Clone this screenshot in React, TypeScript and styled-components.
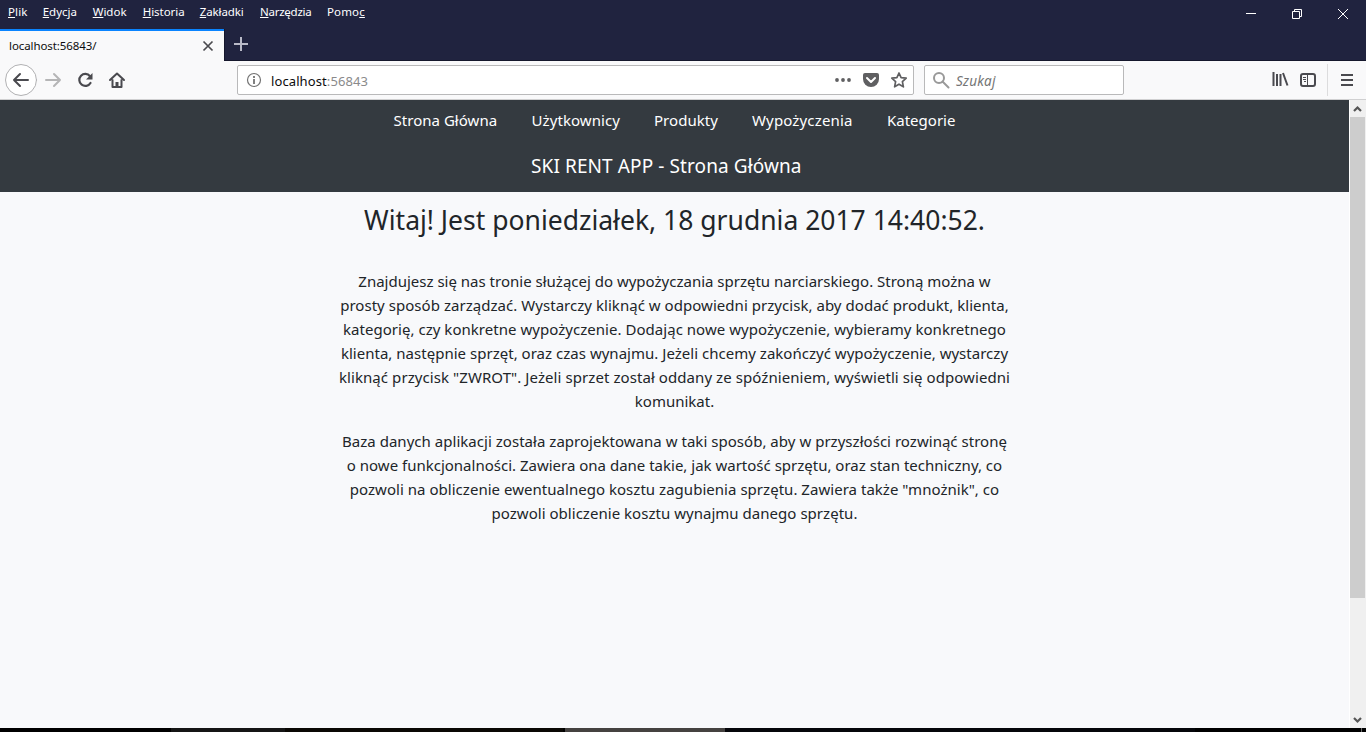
import React from "react";
import styled, { createGlobalStyle } from "styled-components";

const GlobalStyle = createGlobalStyle`
  * { box-sizing: border-box; }
  html, body { margin: 0; padding: 0; overflow: hidden; }
  body { font-family: "Noto Sans", "Open Sans", sans-serif; }
`;

const Window = styled.div`
  width: 1366px;
  height: 732px;
  display: flex;
  flex-direction: column;
  background: #000;
  overflow: hidden;
`;

const MenuBar = styled.div`
  height: 29px;
  flex: none;
  display: flex;
  align-items: flex-start;
  justify-content: space-between;
  background: #20233f;
`;

const Menus = styled.div`
  display: flex;
  padding: 4px 0 0 8px;
`;

const MenuItem = styled.span<{ $width: number; $spacing: number }>`
  width: ${(p) => p.$width}px;
  color: #fff;
  font-size: 11.5px;
  line-height: 16px;
  letter-spacing: ${(p) => p.$spacing}px;
  white-space: nowrap;
  u { text-underline-offset: 1px; text-decoration-thickness: 1px; }
`;

const WindowButtons = styled.div`
  display: flex;
  height: 28px;
`;

const WindowButton = styled.div`
  width: 46px;
  height: 28px;
  display: flex;
`;

const TabStrip = styled.div`
  height: 32px;
  flex: none;
  display: flex;
  background: #20233f;
`;

const Tab = styled.div`
  width: 224px;
  height: 32px;
  display: flex;
  align-items: center;
  justify-content: space-between;
  padding: 0 10px 1px 9px;
  background: #f9f9fa;
  border-top: 2px solid #0a84ff;
`;

const TabTitle = styled.span`
  font-size: 11.5px;
  line-height: 16px;
  letter-spacing: -0.08px;
  color: #0c0c0d;
`;

const StripRest = styled.div`
  flex: 1;
  border-left: 1px solid #15172c;
  border-bottom: 1px solid #15172c;
`;

const Toolbar = styled.div`
  height: 39px;
  flex: none;
  display: flex;
  background: #f9f9fa;
  border-bottom: 1px solid #d0d0d1;
`;

const NavButtons = styled.div`
  width: 237px;
  display: flex;
`;

const Field = styled.div<{ $width: number }>`
  width: ${(p) => p.$width}px;
  height: 30px;
  margin: 4px 10px 0 0;
  display: flex;
  align-items: center;
  background: #fff;
  border: 1px solid #b9b9ba;
  border-radius: 2px;
`;

const Address = styled.span`
  flex: 1;
  padding: 2px 0 0 3px;
  font-size: 13px;
  line-height: 20px;
  letter-spacing: 0.1px;
  color: #8a8a8b;
  b { font-weight: 400; color: #0c0c0d; }
`;

const Placeholder = styled.span`
  padding: 2px 0 0 3px;
  font-size: 13.5px;
  line-height: 20px;
  letter-spacing: 0.2px;
  font-style: italic;
  color: #757575;
`;

const ToolbarEnd = styled.div`
  margin-left: auto;
  display: flex;
`;

const Viewport = styled.div`
  height: 628px;
  flex: none;
  display: flex;
  background: #f8f9fb;
`;

const Page = styled.div`
  width: 1349px;
  flex: none;
  display: flex;
  flex-direction: column;
  color: #212529;
`;

const Header = styled.header`
  height: 92px;
  background: #343a40;
  color: #fff;
`;

const Nav = styled.nav`
  height: 42px;
  padding-left: 393.5px;
  display: flex;
`;

const NavLink = styled.a<{ $width: number; $spacing: number }>`
  width: ${(p) => p.$width}px;
  font-size: 15px;
  line-height: 24px;
  padding-top: 8px;
  letter-spacing: ${(p) => p.$spacing}px;
  white-space: nowrap;
`;

const SiteTitle = styled.div`
  padding: 9px 0 0 531px;
  font-size: 19px;
  line-height: 30px;
  letter-spacing: 0.1px;
  white-space: nowrap;
`;

const Content = styled.main`
  display: flex;
  flex-direction: column;
  align-items: center;
  text-align: center;
`;

const Greeting = styled.h3`
  margin: 11px 0 0;
  font-size: 26.5px;
  font-weight: 400;
  line-height: 34px;
  white-space: nowrap;
`;

const Paragraph = styled.p<{ $top: number }>`
  margin: ${(p) => p.$top}px 0 0;
  display: flex;
  flex-direction: column;
  align-items: center;
`;

const Line = styled.span<{ $spacing: number }>`
  font-size: 15px;
  line-height: 24px;
  letter-spacing: ${(p) => p.$spacing}px;
  white-space: nowrap;
`;

const Scrollbar = styled.div`
  width: 17px;
  display: flex;
  flex-direction: column;
  background: #f0f0f0;
  border-left: 1px solid #fff;
`;

const Thumb = styled.div`
  width: 15px;
  height: 481px;
  background: #cdcdcd;
`;

const Spacer = styled.div`
  flex: 1;
`;

const Taskbar = styled.div`
  height: 4px;
  display: flex;
  background: #000;
`;

const TaskSegment = styled.div<{ $width: number; $color: string }>`
  width: ${(p) => p.$width}px;
  background: ${(p) => p.$color};
`;

const menus: [string, string, string, number, number][] = [
  ["", "P", "lik", 34.7, 0.1],
  ["", "E", "dycja", 50, 0],
  ["", "W", "idok", 50, 0],
  ["", "H", "istoria", 57, -0.05],
  ["", "Z", "akładki", 60.3, -0.1],
  ["", "N", "arzędzia", 67, -0.25],
  ["Pomo", "c", "", 40, 0.15],
];

const links: [string, number, number][] = [
  ["Strona Główna", 138, 0.03],
  ["Użytkownicy", 122.5, 0.08],
  ["Produkty", 98, 0.03],
  ["Wypożyczenia", 135, 0.15],
  ["Kategorie", 90, 0],
];

const intro: [string, number][] = [
  ["Znajdujesz się nas tronie służącej do wypożyczania sprzętu narciarskiego. Stroną można w", 0],
  ["prosty sposób zarządzać. Wystarczy kliknąć w odpowiedni przycisk, aby dodać produkt, klienta,", 0.04],
  ["kategorię, czy konkretne wypożyczenie. Dodając nowe wypożyczenie, wybieramy konkretnego", 0.035],
  ["klienta, następnie sprzęt, oraz czas wynajmu. Jeżeli chcemy zakończyć wypożyczenie, wystarczy", 0.02],
  ['kliknąć przycisk "ZWROT". Jeżeli sprzet został oddany ze spóźnieniem, wyświetli się odpowiedni', 0.075],
  ["komunikat.", 0],
];

const details: [string, number][] = [
  ["Baza danych aplikacji została zaprojektowana w taki sposób, aby w przyszłości rozwinąć stronę", 0.03],
  ["o nowe funkcjonalności. Zawiera ona dane takie, jak wartość sprzętu, oraz stan techniczny, co", 0],
  ['pozwoli na obliczenie ewentualnego kosztu zagubienia sprzętu. Zawiera także "mnożnik", co', 0.03],
  ["pozwoli obliczenie kosztu wynajmu danego sprzętu.", 0.03],
];

const segments: [number, string][] = [
  [171, "#000"],
  [114, "#151515"],
  [278, "#0a0804"],
  [2, "#000"],
  [160, "#454240"],
  [470, "#05060a"],
  [166, "#000"],
  [1, "#6a6a6a"],
];

export default function App() {
  return (
    <>
      <GlobalStyle />
      <Window>
        <MenuBar>
          <Menus>
            {menus.map(([before, key, after, width, spacing]) => (
              <MenuItem key={before + key + after} $width={width} $spacing={spacing}>
                {before}<u>{key}</u>{after}
              </MenuItem>
            ))}
          </Menus>
          <WindowButtons>
            <WindowButton><svg width="46" height="28"><path d="M18 13.5h10" stroke="#fff" /></svg></WindowButton>
            <WindowButton><svg width="46" height="28" fill="none" stroke="#fff"><path d="M18.5 11.5h7v7h-7zM20.5 11V9.500h7v7h-2" /></svg></WindowButton>
            <WindowButton><svg width="46" height="28"><path d="M18 9l10 10M28 9L18 19" stroke="#fff" /></svg></WindowButton>
          </WindowButtons>
        </MenuBar>
        <TabStrip>
          <Tab>
            <TabTitle>localhost:56843/</TabTitle>
            <svg width="12" height="12"><path d="M1.500 1.500l9 9M10.500 1.500l-9 9" stroke="#4a4a4f" strokeWidth="1.700" /></svg>
          </Tab>
          <StripRest>
            <svg width="33" height="30"><path d="M9 15h14M16 8v14" stroke="#b9bac8" strokeWidth="2" /></svg>
          </StripRest>
        </TabStrip>
        <Toolbar>
          <NavButtons>
            <svg width="140" height="38" fill="none" stroke="#4a4a4f" strokeWidth="2" strokeLinecap="round" strokeLinejoin="round">
              <circle cx="21" cy="19" r="15.500" fill="#fff" stroke="#b1b1b3" strokeWidth="1" />
              <path d="M28 19H14M20 13l-6 6 6 6" />
              <path d="M46 19h14M54 13l6 6-6 6" stroke="#b5b5b6" />
              <path d="M90 15.200A6 6 0 1 0 90.500 22" strokeWidth="2.200" />
              <path d="M92.500 12v6.500h-6.500z" fill="#4a4a4f" stroke="none" />
              <path d="M110 19l7-6.500 7 6.500M112.500 19v7h9v-7" />
              <path d="M115.500 26v-5h3v5z" fill="#4a4a4f" stroke="none" />
            </svg>
          </NavButtons>
          <Field $width={677}>
            <svg width="30" height="28" fill="none" stroke="#737373">
              <circle cx="16" cy="14" r="6.500" strokeWidth="1.200" />
              <path d="M16 13v5M16 10v2" strokeWidth="1.800" />
            </svg>
            <Address><b>localhost</b>:56843</Address>
            <svg width="84" height="28" fill="#5f5f61">
              <circle cx="8" cy="14" r="1.900" /><circle cx="14" cy="14" r="1.900" /><circle cx="20" cy="14" r="1.900" />
              <path d="M36 7h12a2 2 0 0 1 2 2v4a8 8 0 0 1-16 0V9a2 2 0 0 1 2-2z" />
              <path d="M38 12l4 4 4-4" fill="none" stroke="#fff" strokeWidth="2" strokeLinecap="round" strokeLinejoin="round" />
              <path d="M70 7l2.100 4.700 5.100.5-3.800 3.500 1 5.100-4.400-2.600-4.400 2.600 1-5.100-3.800-3.500 5.100-.5z" fill="none" stroke="#5f5f61" strokeWidth="1.700" strokeLinejoin="round" />
            </svg>
          </Field>
          <Field $width={200}>
            <svg width="28" height="28" fill="none" stroke="#999" strokeWidth="2">
              <circle cx="14" cy="12" r="5" /><path d="M17.500 15.500l6 6" strokeLinecap="round" />
            </svg>
            <Placeholder>Szukaj</Placeholder>
          </Field>
          <ToolbarEnd>
            <svg width="100" height="38" fill="none" stroke="#4a4a4f" strokeWidth="2">
              <path d="M7.500 11v14M11 13v12M14.500 13v12M17 12l4.500 12.500" />
              <rect x="35" y="13" width="14" height="12" rx="2" />
              <path d="M41.500 13v12M37 16.500h3M37 18.500h3M38 20.500h2" strokeWidth="1" />
              <path d="M61.500 3v32" stroke="#dcdcdd" strokeWidth="1" />
              <path d="M75 14h12M75 19h12M75 24h12" />
            </svg>
          </ToolbarEnd>
        </Toolbar>
        <Viewport>
          <Page>
            <Header>
              <Nav>
                {links.map(([text, width, spacing]) => (
                  <NavLink key={text} $width={width} $spacing={spacing}>{text}</NavLink>
                ))}
              </Nav>
              <SiteTitle>SKI RENT APP - Strona Główna</SiteTitle>
            </Header>
            <Content>
              <Greeting>Witaj! Jest poniedziałek, 18 grudnia 2017 14:40:52.</Greeting>
              <Paragraph $top={32}>
                {intro.map(([text, spacing]) => <Line key={text} $spacing={spacing}>{text}</Line>)}
              </Paragraph>
              <Paragraph $top={16}>
                {details.map(([text, spacing]) => <Line key={text} $spacing={spacing}>{text}</Line>)}
              </Paragraph>
            </Content>
          </Page>
          <Scrollbar>
            <svg width="16" height="17"><path d="M4 11l3.500-3.500L11 11" fill="none" stroke="#555" strokeWidth="2.200" /></svg>
            <Thumb />
            <Spacer />
            <svg width="16" height="17"><path d="M4 7l3.500 3.500L11 7" fill="none" stroke="#555" strokeWidth="2.200" /></svg>
          </Scrollbar>
        </Viewport>
        <Taskbar>
          {segments.map(([width, color], i) => <TaskSegment key={i} $width={width} $color={color} />)}
        </Taskbar>
      </Window>
    </>
  );
}
